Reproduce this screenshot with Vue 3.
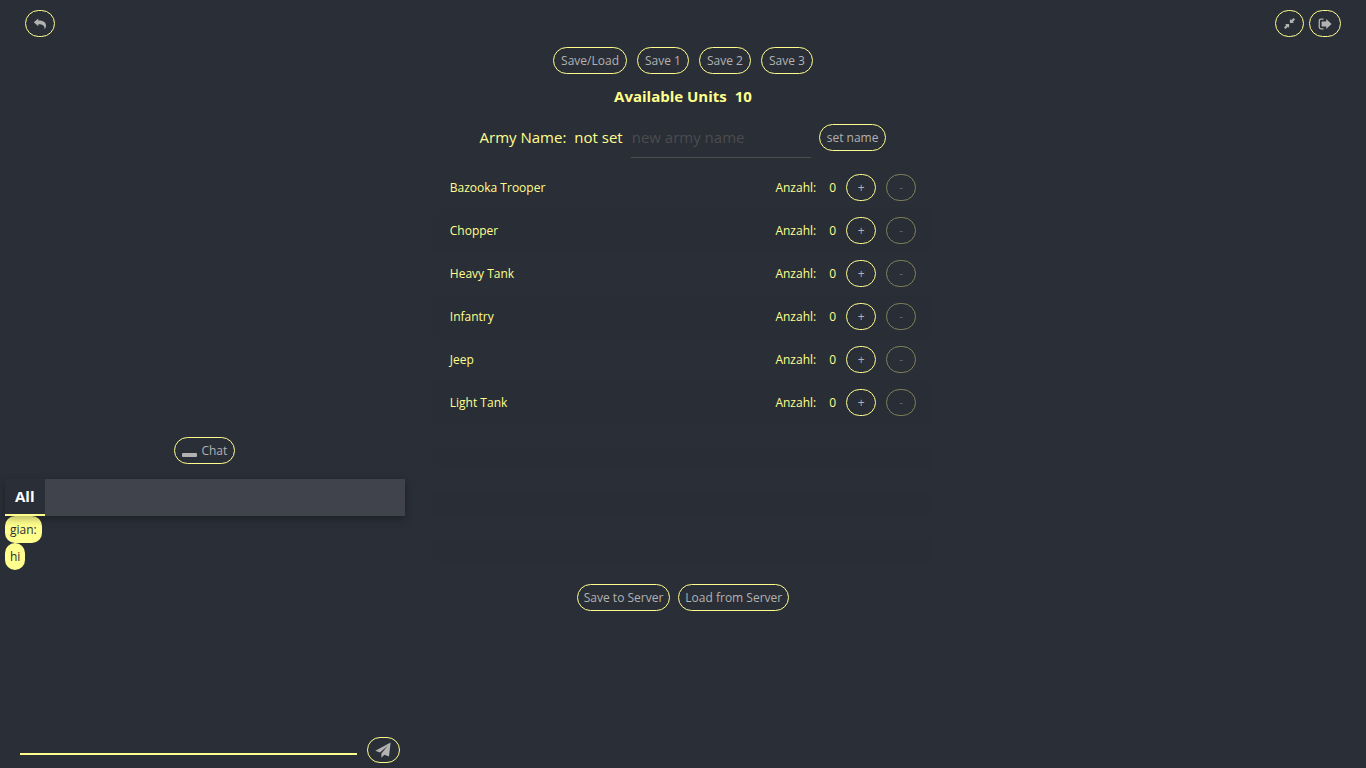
<script setup>
import { ref } from 'vue'

const slots = ['Save/Load', 'Save 1', 'Save 2', 'Save 3']
const units = ref([
  { name: 'Bazooka Trooper', count: 0 },
  { name: 'Chopper', count: 0 },
  { name: 'Heavy Tank', count: 0 },
  { name: 'Infantry', count: 0 },
  { name: 'Jeep', count: 0 },
  { name: 'Light Tank', count: 0 },
])
const available = ref(10)
const armyName = ref('not set')
const newName = ref('')
const draft = ref('')
const messages = ref(['gian:', 'hi'])

function add(unit, step) {
  unit.count += step
  available.value -= step
}

function applyName() {
  if (newName.value) armyName.value = newName.value
}

function send() {
  if (draft.value) messages.value.push(draft.value)
  draft.value = ''
}
</script>

<template>
  <div class="screen">
    <aside class="left">
      <div class="corner">
        <button class="pill icon" type="button" aria-label="Back">
          <svg width="14" height="12" viewBox="0 0 14 12">
            <path d="M.8 4.200 5.300.4v2.200c5 0 7.700 1.600 7.700 5.200 0 1.500-.6 2.700-1.500 3.500.4-3.400-1.500-5-6.200-5v2z" />
          </svg>
        </button>
      </div>

      <section class="chat">
        <button class="pill toggle" type="button">
          <svg width="15" height="12" viewBox="0 0 15 12"><rect y="8" width="15" height="4" rx="1" /></svg>
          Chat
        </button>
        <nav class="tabs"><button class="tab" type="button">All</button></nav>
        <ul class="messages">
          <li v-for="(m, i) in messages" :key="i">{{ m }}</li>
        </ul>
        <form class="compose" @submit.prevent="send">
          <input v-model="draft" type="text" aria-label="Message" />
          <button class="pill icon send" type="submit" aria-label="Send">
            <svg width="16" height="16" viewBox="0 0 16 16">
              <path d="M15.600.5 14 14.600l-4.600-1.800-3 2.900v-4.200L13 3.600l-8 7L.3 8.800z" />
            </svg>
          </button>
        </form>
      </section>
    </aside>

    <main class="center">
      <div class="slots">
        <button v-for="s in slots" :key="s" class="pill" type="button">{{ s }}</button>
      </div>
      <h1 class="available"><span>Available Units</span><span>{{ available }}</span></h1>
      <form class="army" @submit.prevent="applyName">
        <label for="army-name">Army Name:</label>
        <span>{{ armyName }}</span>
        <input id="army-name" v-model="newName" type="text" placeholder="new army name" />
        <button class="pill" type="submit">set name</button>
      </form>
      <ul class="units">
        <li v-for="u in units" :key="u.name" class="unit">
          <span class="name">{{ u.name }}</span>
          <span>Anzahl:</span>
          <span class="count">{{ u.count }}</span>
          <button class="pill round" type="button" :aria-label="'Add ' + u.name" :disabled="available === 0" @click="add(u, 1)">+</button>
          <button class="pill round" type="button" :aria-label="'Remove ' + u.name" :disabled="u.count === 0" @click="add(u, -1)">-</button>
        </li>
        <li v-for="n in 6" :key="n" class="blank"></li>
      </ul>
      <div class="server">
        <button class="pill" type="button">Save to Server</button>
        <button class="pill" type="button">Load from Server</button>
      </div>
    </main>

    <aside class="right">
      <button class="pill icon small" type="button" aria-label="Leave full screen">
        <svg width="11" height="11" viewBox="0 0 11 11">
          <path d="M5.900 1v4.100H10L8.800 3.900 11 1.500 9.500 0 7.100 2.200zM5.100 10V5.900H1l1.200 1.200L0 9.500 1.500 11l2.400-2.200z" />
        </svg>
      </button>
      <button class="pill icon exit" type="button" aria-label="Log out">
        <svg width="14" height="12" viewBox="0 0 14 12">
          <path d="M5.500.5v1.200H3.200q-1.300 0-1.300 1.300v6q0 1.300 1.300 1.300h2.300v1.200H3Q.6 11.500.6 9.100V2.900Q.6.5 3 .5z" />
          <path d="M8.200 1.100 13.600 6 8.200 10.900V8.400H3.600V3.600h4.600z" />
        </svg>
      </button>
    </aside>
  </div>
</template>

<style>
body {
  margin: 0;
  background: #2a2e37;
}
</style>

<style scoped>
.screen {
  --accent: #ffff8d;
  --muted: #b2b2b2;
  display: grid;
  grid-template-columns: 3fr 4fr 3fr;
  min-height: 100vh;
  color: var(--accent);
  font: 12px/17px "Segoe UI", "Open Sans", "Noto Sans", sans-serif;
}
button,
input {
  font: inherit;
  box-sizing: border-box;
}
ul {
  list-style: none;
  margin: 0;
  padding: 0;
}
svg {
  display: block;
  fill: var(--muted);
}
.pill {
  display: inline-flex;
  align-items: center;
  justify-content: center;
  height: 27px;
  padding: 0 7px;
  border: 1px solid var(--accent);
  border-radius: 14px;
  background: transparent;
  color: var(--muted);
  white-space: nowrap;
}
.pill:disabled {
  opacity: 0.4;
}
.icon {
  width: 30px;
  padding: 0;
}
.round {
  width: 30px;
  padding: 0;
}
.left {
  display: flex;
  flex-direction: column;
  justify-content: space-between;
}
.corner {
  padding: 10px 25px;
}
.chat {
  display: flex;
  flex-direction: column;
  height: 331px;
  padding: 0 5px;
}
.toggle {
  align-self: center;
  gap: 4px;
}
.tabs {
  display: flex;
  height: 37px;
  margin-top: 15px;
  background: #40434b;
  box-shadow: 0 3px 8px rgba(0, 0, 0, 0.3);
  position: relative;
}
.tab {
  padding: 0 10px;
  border: 0;
  border-bottom: 2px solid var(--accent);
  background: #2a2e37;
  color: #fff;
  font-size: 15px;
  font-weight: 700;
}
.messages {
  flex: 1;
}
.messages li {
  width: fit-content;
  padding: 5px;
  border-radius: 10px;
  background: var(--accent);
  color: #2a2e37;
}
.compose {
  display: flex;
  align-items: flex-end;
  gap: 10px;
  padding: 0 5px 5px 15px;
}
.compose input {
  flex: 1;
  min-width: 0;
  height: 30px;
  margin-bottom: 8px;
  border: 0;
  border-bottom: 2px solid var(--accent);
  background: transparent;
  color: var(--accent);
  outline: 0;
}
.send {
  width: 33px;
  height: 26px;
}
.center {
  display: flex;
  flex-direction: column;
  align-items: center;
  padding: 47px 23px 0;
}
.slots {
  display: flex;
  gap: 10px;
}
.available {
  display: flex;
  gap: 8px;
  margin: 12px 0 0;
  font-size: 15px;
  line-height: 20px;
  font-weight: 700;
}
.army {
  display: flex;
  align-items: center;
  gap: 8px;
  margin-top: 11px;
  font-size: 15px;
}
.army input {
  width: 180px;
  height: 41px;
  padding: 0 1px;
  border: 0;
  border-bottom: 1px solid #4d4e4c;
  background: transparent;
  color: var(--accent);
  outline: 0;
}
.army input::placeholder {
  color: #4b4c4e;
  opacity: 1;
}
.army .pill {
  font-size: 12px;
}
.units {
  width: 100%;
  min-height: 400px;
  margin-top: 8px;
}
.unit {
  display: flex;
  align-items: center;
  gap: 10px;
  height: 43px;
  padding: 0 17px;
}
.unit .name {
  flex: 1;
}
.count {
  width: 10px;
  text-align: right;
}
.blank {
  height: 23px;
}
.unit:nth-child(even),
.blank:nth-child(even) {
  background: #292d36;
}
.server {
  display: flex;
  gap: 8px;
  margin-top: 18px;
}
.server .pill {
  padding: 0 6px;
}
.right {
  display: flex;
  justify-content: flex-end;
  gap: 5px;
  padding: 10px 25px;
}
.small {
  width: 29px;
}
.exit {
  width: 32px;
}
</style>
